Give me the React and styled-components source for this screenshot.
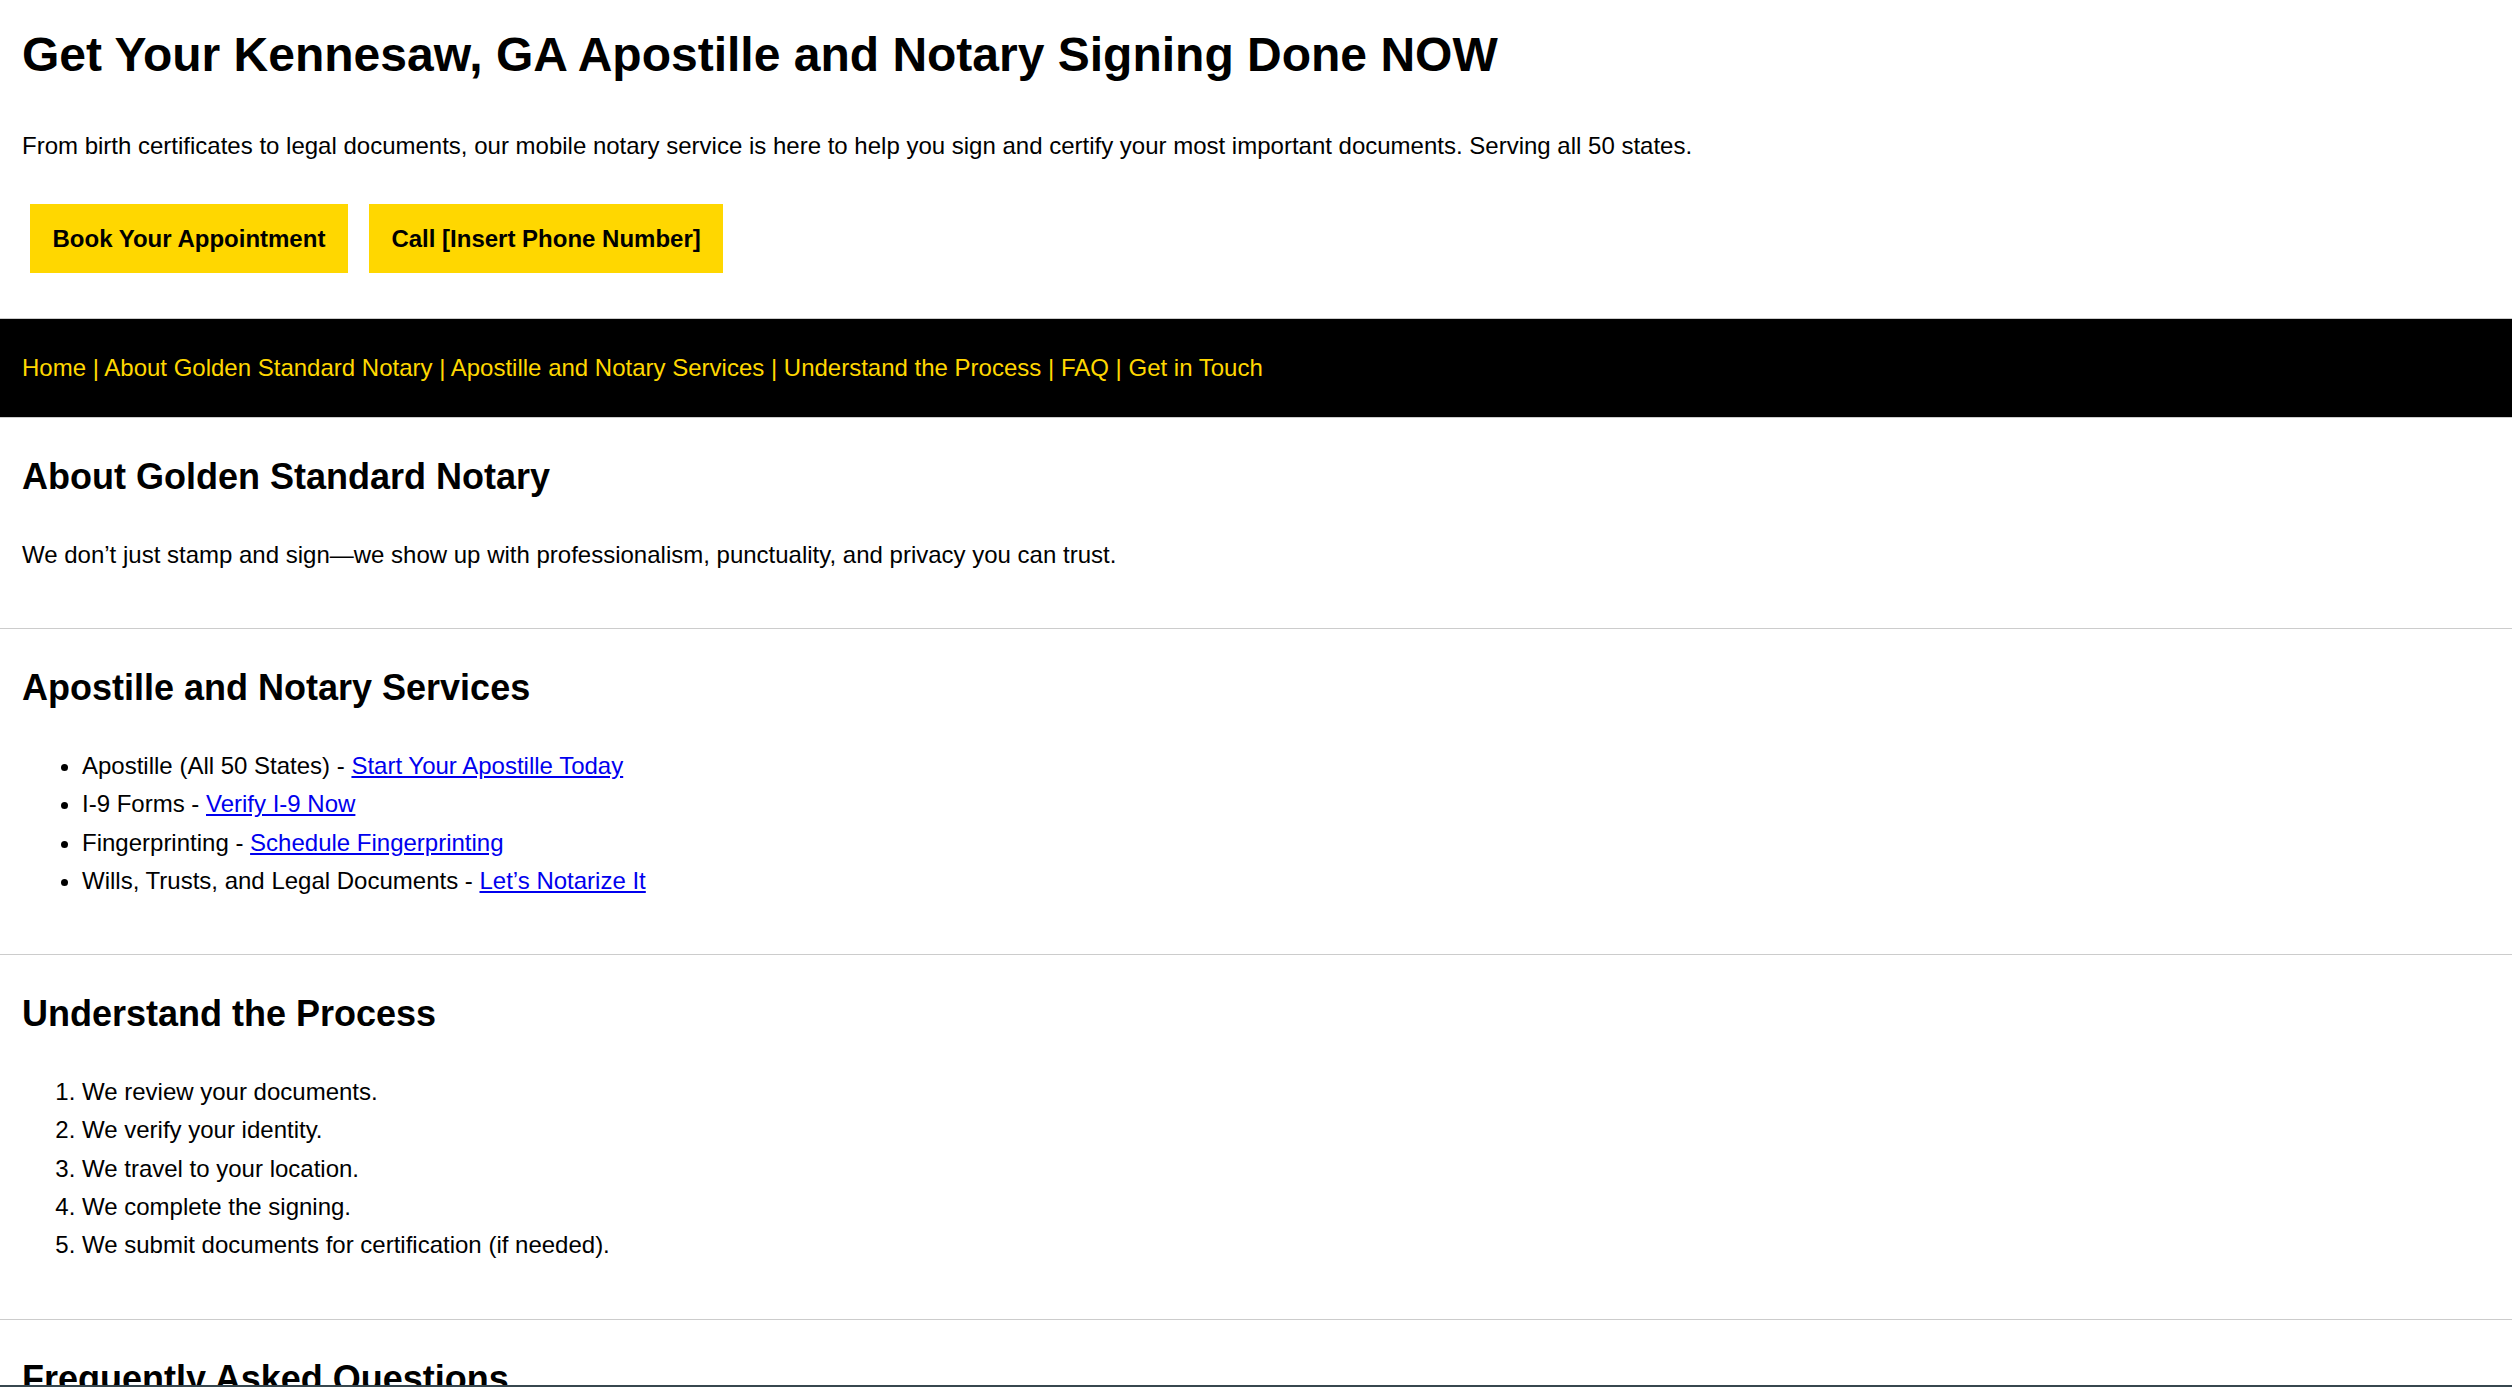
import React from "react";
import styled, { createGlobalStyle } from "styled-components";

const GlobalStyles = createGlobalStyle`
  html, body {
    margin: 0;
    padding: 0;
    background: #fff;
  }
  body, button {
    font-family: "Liberation Sans", Arial, sans-serif;
    font-size: 24px;
    line-height: 1.6;
    color: #000;
  }
`;

const Header = styled.header`
  padding: 0 22px 45px;
  border-bottom: 1px solid #ccc;
`;

const Title = styled.h1`
  margin: 17px 0 33px;
  font-size: 48px;
  font-weight: bold;
  line-height: 1.6;
`;

const Lead = styled.p`
  margin: 0;
`;

const ButtonRow = styled.div`
  display: flex;
  gap: 21px;
  margin-top: 39px;
  padding-left: 8px;
`;

const CtaButton = styled.a`
  display: block;
  padding: 21px 22.5px;
  background: #ffd700;
  color: #000;
  font-weight: bold;
  line-height: 27px;
  text-decoration: none;
`;

const Nav = styled.nav`
  background: #000;
  padding: 35px 22px;
  line-height: 28px;
  color: #ffd700;
  border-bottom: 1px solid #ccc;
`;

const NavLink = styled.a`
  color: #ffd700;
  text-decoration: none;
`;

const Section = styled.section`
  padding: 0 22px 30px;
  border-bottom: 1px solid #ccc;
`;

const SectionTitle = styled.h2`
  margin: 30px 0;
  font-size: 36px;
  font-weight: bold;
  line-height: 1.6;
`;

const Text = styled.p`
  margin: 0 0 24px;
`;

const List = styled.ul`
  margin: 0 0 24px;
  padding-left: 60px;
`;

const Steps = styled.ol`
  margin: 0 0 24px;
  padding-left: 60px;
`;

const TextLink = styled.a`
  color: #0000ee;
  text-decoration: underline;
`;

const BottomBar = styled.div`
  position: fixed;
  left: 0;
  right: 0;
  bottom: 0;
  height: 2px;
  background: #37474f;
`;

const navItems = [
  "Home",
  "About Golden Standard Notary",
  "Apostille and Notary Services",
  "Understand the Process",
  "FAQ",
  "Get in Touch",
];

const services = [
  ["Apostille (All 50 States)", "Start Your Apostille Today"],
  ["I-9 Forms", "Verify I-9 Now"],
  ["Fingerprinting", "Schedule Fingerprinting"],
  ["Wills, Trusts, and Legal Documents", "Let\u2019s Notarize It"],
];

const steps = [
  "We review your documents.",
  "We verify your identity.",
  "We travel to your location.",
  "We complete the signing.",
  "We submit documents for certification (if needed).",
];

export default function App() {
  return (
    <>
      <GlobalStyles />
      <Header>
        <Title>Get Your Kennesaw, GA Apostille and Notary Signing Done NOW</Title>
        <Lead>
          From birth certificates to legal documents, our mobile notary service is here to help you
          sign and certify your most important documents. Serving all 50 states.
        </Lead>
        <ButtonRow>
          <CtaButton href="#contact">Book Your Appointment</CtaButton>
          <CtaButton href="#contact">Call [Insert Phone Number]</CtaButton>
        </ButtonRow>
      </Header>

      <Nav>
        {navItems.map((item, i) => (
          <React.Fragment key={item}>
            {i > 0 && " | "}
            <NavLink href="#">{item}</NavLink>
          </React.Fragment>
        ))}
      </Nav>

      <Section id="about">
        <SectionTitle>About Golden Standard Notary</SectionTitle>
        <Text>
          We don’t just stamp and sign—we show up with professionalism, punctuality, and privacy you
          can trust.
        </Text>
      </Section>

      <Section id="services">
        <SectionTitle>Apostille and Notary Services</SectionTitle>
        <List>
          {services.map(([name, cta]) => (
            <li key={name}>
              {name} - <TextLink href="#contact">{cta}</TextLink>
            </li>
          ))}
        </List>
      </Section>

      <Section id="process">
        <SectionTitle>Understand the Process</SectionTitle>
        <Steps>
          {steps.map((s) => (
            <li key={s}>{s}</li>
          ))}
        </Steps>
      </Section>

      <Section id="faq">
        <SectionTitle>Frequently Asked Questions</SectionTitle>
        <Text>
          <strong>Do you travel to me?</strong> Yes, we come to your home, office, or any location
          you choose.
        </Text>
        <Text>
          <strong>How long does an apostille take?</strong> Timelines vary by state; we will walk you
          through every step.
        </Text>
      </Section>

      <Section id="contact">
        <SectionTitle>Get in Touch</SectionTitle>
        <Text>Call [Insert Phone Number] or book your appointment online today.</Text>
      </Section>

      <BottomBar />
    </>
  );
}
